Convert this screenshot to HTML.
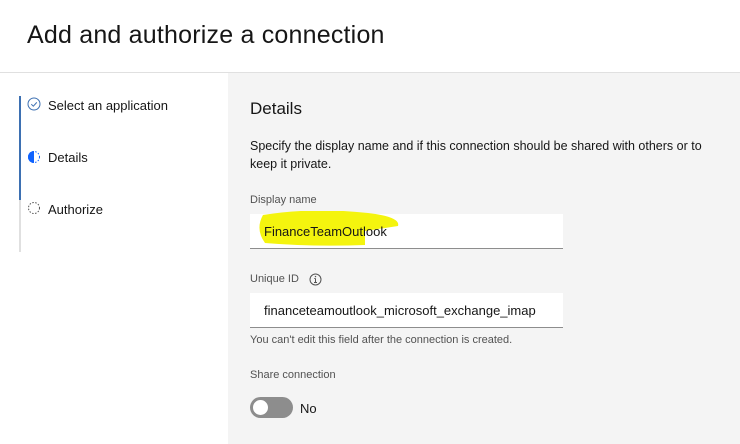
<!DOCTYPE html>
<html><head><meta charset="utf-8"><style>
*{margin:0;padding:0;box-sizing:border-box}
body{width:740px;height:444px;overflow:hidden;font-family:"Liberation Sans",sans-serif;background:#fff;color:#161616;position:relative}
.hdr{position:absolute;left:0;top:0;width:740px;height:73px;border-bottom:1px solid #e0e0e0;background:#fff}
.hdr h1{position:absolute;left:27px;top:21px;font-size:25px;font-weight:400;letter-spacing:0.2px}
.right{position:absolute;left:228px;top:73px;width:512px;height:371px;background:#f4f4f4}
.abs{position:absolute}
.line{position:absolute;left:19px;width:2px}
.step{position:absolute;left:48px;font-size:13px}
.lbl{position:absolute;left:250px;font-size:11px;color:#525252}
.inp{position:absolute;left:250px;width:313px;height:35px;background:#fff;border-bottom:1px solid #8d8d8d}
.inp span{position:absolute;left:14px;top:10px;font-size:13px}
</style></head><body>
<div class="hdr"><h1>Add and authorize a connection</h1></div>
<div class="line" style="top:96px;height:104px;background:#3d70b2"></div>
<div class="line" style="top:200px;height:52px;background:#e0e0e0"></div>
<svg class="abs" style="left:27px;top:97px" width="14" height="14" viewBox="0 0 14 14"><circle cx="7" cy="7" r="6" fill="none" stroke="#3d70b2" stroke-width="1"/><path d="M4.3 7.2l2 2 3.5-3.8" fill="none" stroke="#3d70b2" stroke-width="1"/></svg>
<div class="step" style="top:98px">Select an application</div>
<svg class="abs" style="left:27px;top:150px" width="14" height="14" viewBox="0 0 14 14"><path d="M7 1a6 6 0 0 0 0 12z" fill="#0f62fe"/><circle cx="7" cy="7" r="5.5" fill="none" stroke="#0f62fe" stroke-width="1" stroke-dasharray="1.5 1.5"/></svg>
<div class="step" style="top:150px">Details</div>
<svg class="abs" style="left:27px;top:201px" width="14" height="14" viewBox="0 0 14 14"><circle cx="7" cy="7" r="5.5" fill="none" stroke="#525252" stroke-width="1" stroke-dasharray="1.5 1.5"/></svg>
<div class="step" style="top:202px">Authorize</div>
<div class="right"></div>
<div class="abs" style="left:250px;top:99px;font-size:17px">Details</div>
<div class="abs" style="left:250px;top:137px;font-size:12.5px;line-height:18px;width:465px">Specify the display name and if this connection should be shared with others or to keep it private.</div>
<div class="lbl" style="top:194px">Display name</div>
<div class="inp" style="top:214px"><svg class="abs" style="left:3px;top:-3px" width="150" height="36"><path d="M10 4 Q60 -4 115 2 Q148 6 145 15 L112 20 L112 34 Q60 36 12 32 Q2 18 10 4z" fill="#f4f40e"/></svg><span>FinanceTeamOutlook</span></div>
<div class="lbl" style="top:273px">Unique ID</div>
<svg class="abs" style="left:309px;top:273px" width="13" height="13" viewBox="0 0 13 13"><circle cx="6.5" cy="6.5" r="5.5" fill="none" stroke="#525252"/><path d="M6.5 5.5v4M5 9.5h3M5.3 5.5h1.2" stroke="#525252" fill="none"/><circle cx="6.5" cy="3.6" r=".7" fill="#525252"/></svg>
<div class="inp" style="top:293px"><span>financeteamoutlook_microsoft_exchange_imap</span></div>
<div class="lbl" style="top:334px">You can't edit this field after the connection is created.</div>
<div class="lbl" style="top:369px">Share connection</div>
<div class="abs" style="left:250px;top:397px;width:43px;height:21px;border-radius:11px;background:#8d8d8d"><div class="abs" style="left:3px;top:3px;width:15px;height:15px;border-radius:50%;background:#fff"></div></div>
<div class="abs" style="left:300px;top:401px;font-size:13px">No</div>
</body></html>
